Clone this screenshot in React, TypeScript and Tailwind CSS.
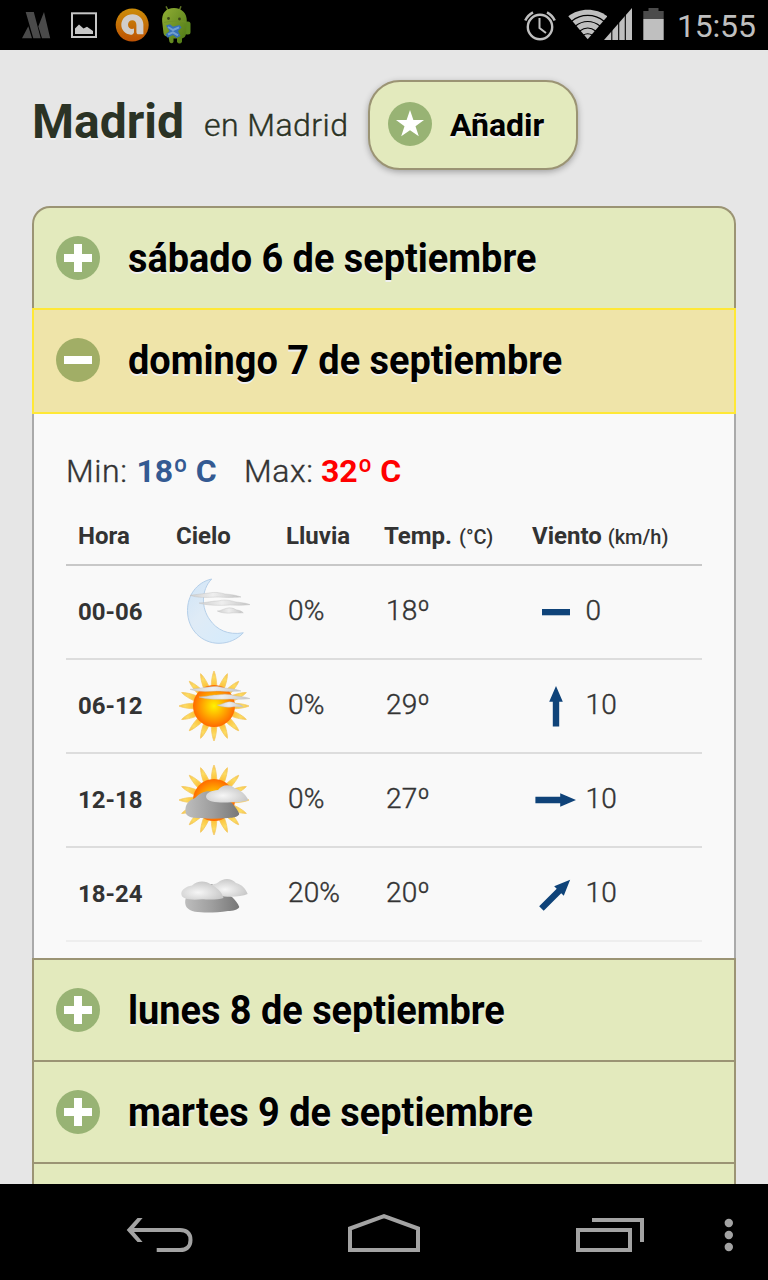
import React from "react";

const shadow = "[text-shadow:0_2px_0_#f0f0f0]";

function StatusBar() {
  return (
    <header className="flex h-[50px] shrink-0 items-center bg-black pl-[20px] text-[#bfbfbf]">
      <svg width="32" height="50" viewBox="20 0 32 50" fill="#4a4a4a">
        <path d="M22 38.3 28.3 26.3 32 38.3ZM25.7 12H33.8L40.7 38.3H33.3ZM38.3 26.5 44 12 50.2 38.3H42Z" />
      </svg>
      <svg className="ml-[17px]" width="30" height="50" viewBox="69 0 30 50">
        <rect x="72" y="13.3" width="24" height="23.7" fill="none" stroke="#c6c6c6" strokeWidth="2" />
        <path d="M75 34V28.5L79 24.5 83.5 28.5 87 26.8 93 31V34Z" fill="#c6c6c6" />
      </svg>
      <svg className="ml-[15px]" width="36" height="50" viewBox="114 0 36 50">
        <defs>
          <linearGradient id="orange" x1="0" y1="0" x2="0" y2="1">
            <stop offset="0" stopColor="#cc8d08" />
            <stop offset="1" stopColor="#bd5204" />
          </linearGradient>
        </defs>
        <circle cx="132.2" cy="25" r="16.5" fill="url(#orange)" />
        <path d="M132.5 14.2C138.7 14.2 143.4 18.6 143.4 24.5V34.3H138.6C137.2 34.3 136.4 33.4 136.4 32V25C136.4 22.3 134.8 20.3 132.3 20.3C129.8 20.3 128 22.2 128 24.7C128 27.2 129.8 29 132 29C132.8 29 133.5 28.8 134 28.5V32.4C133.4 34 132.3 34.7 130.7 34.7C125.3 34.2 121.3 30 121.3 24.8C121.3 18.8 126.2 14.2 132.5 14.2Z" fill="#d0cdca" />
      </svg>
      <svg className="ml-[11px]" width="32" height="50" viewBox="161 0 32 50">
        <defs>
          <linearGradient id="droid" x1="0" y1="0" x2="1" y2="1">
            <stop offset="0" stopColor="#91ae35" />
            <stop offset="1" stopColor="#4d7815" />
          </linearGradient>
        </defs>
        <path d="M166 6.3 168.5 11M181 6.3 179 11" stroke="#5f7425" strokeWidth="1.5" />
        <rect x="184.5" y="21.5" width="6" height="13" rx="2.5" fill="#5f8a20" />
        <path d="M162.2 22C161.5 13 166 8 174 8C182 8 187 13.5 186.8 21L186 34Q185.5 37.5 182 38.5V42Q179.5 45 177 42V38.5H173.5V42Q171.5 44.5 169.5 42L168.5 37Q163.8 36.5 163.5 33Z" fill="url(#droid)" />
        <path d="M164 22.5C171 20.5 179 21 186 22" fill="none" stroke="#6f8f28" strokeWidth="0.8" />
        <circle cx="168.5" cy="18.5" r="1.4" fill="#3a4618" />
        <circle cx="179.5" cy="19" r="1.4" fill="#3a4618" />
        <path d="M166 25.5 170 24.3 173 26.8 179.5 25 181.5 27.5 178 31 180.5 36 176.5 38 173 35 167.5 37.8 165.5 34.5 169.5 31Z" fill="#3770b8" />
        <path d="M168 27 173 30 179 27.3M168 34.5 173 32.3 178 35.3" fill="none" stroke="#719fd0" strokeWidth="2" />
      </svg>
      <div className="ml-auto flex items-center">
        <svg width="34" height="50" viewBox="523 0 34 50" fill="none" stroke="#bfbfbf">
          <circle cx="540" cy="27" r="12.2" strokeWidth="2.4" />
          <path d="M539.5 18V28L546 33" strokeWidth="2" />
          <path d="M525.3 20.5A17 17 0 0 1 533 12.3M547 12.3A17 17 0 0 1 554.7 20.5" strokeWidth="2.6" />
        </svg>
        <svg className="ml-[10px]" width="40" height="50" viewBox="567 0 40 50">
          <path d="M568.3 16.3C579 7.4 596.5 7.4 607.3 16.3L587.7 39.3Z" fill="#bfbfbf" />
          <path d="M571.5 21.2C581 13.4 594.5 13.4 604 21.2M575.5 26C583 20 592.5 20 600 26M579.7 31C585 27 590.5 27 595.7 31M583 35.3C586 33.3 589.5 33.3 592.5 35.3" fill="none" stroke="black" strokeWidth="1.1" />
        </svg>
        <svg className="-ml-[3px]" width="30" height="50" viewBox="604 0 30 50">
          <path d="M604 40 632 8V40Z" fill="#bfbfbf" />
          <path d="M611.8 25V41M618.7 15V41M625.3 8V41" stroke="black" strokeWidth="1.1" />
        </svg>
        <svg className="ml-[8px]" width="24" height="50" viewBox="642 0 24 50">
          <path d="M643.3 11H648.5V8H658.5V11H663.7V19H643.3Z" fill="#4b4b4b" />
          <path d="M643.3 19H663.7V40H643.3Z" fill="#bfbfbf" />
        </svg>
        <span className="ml-[11px] w-[91px] whitespace-nowrap pt-[2px] text-[32px] leading-[50px] -tracking-[0.2px]">15:55</span>
      </div>
    </header>
  );
}

function BadgeIcon({ kind }: { kind: "plus" | "minus" | "star" }) {
  return (
    <svg className="shrink-0" width="44" height="44" viewBox="0 0 44 44">
      <circle cx="22" cy="22" r="22" fill={kind === "minus" ? "#a1ae66" : "#98b374"} />
      {kind === "star" ? (
        <path d="M22 8 25.4 18H36L27.5 24.2 30.8 34.3 22 28.2 13.2 34.3 16.5 24.2 8 18H18.6Z" fill="white" />
      ) : (
        <path d={kind === "plus" ? "M8 18H18V8H26V18H36V26H26V36H18V26H8Z" : "M8 18H36V26H8Z"} fill="white" />
      )}
    </svg>
  );
}

function DayHeader({ label, open = false, className = "" }: { label: string; open?: boolean; className?: string }) {
  return (
    <h2
      className={`flex shrink-0 items-center pl-[22px] ${
        open
          ? "h-[106px] border-2 border-[#ffe836] bg-[#efe4a9] pb-[2px]"
          : "h-[102px] border-x-2 border-t-2 border-[#9b9474] bg-[#e3eabd]"
      } ${className}`}
    >
      <BadgeIcon kind={open ? "minus" : "plus"} />
      <span className={`ml-[27.5px] origin-left scale-x-[0.947] whitespace-nowrap pt-[2px] text-[40px] font-bold leading-[52px] text-black ${shadow}`}>{label}</span>
    </h2>
  );
}

function SkyDefs() {
  return (
    <svg width="0" height="0" className="absolute">
      <defs>
        <linearGradient id="moon" x1="0" y1="0" x2="1" y2="1">
          <stop offset="0" stopColor="#cfe4f7" />
          <stop offset="0.4" stopColor="#dfebf6" />
          <stop offset="1" stopColor="#d3ebfd" />
        </linearGradient>
        <radialGradient id="disc">
          <stop offset="0" stopColor="#fff200" />
          <stop offset="0.5" stopColor="#ffae00" />
          <stop offset="1" stopColor="#ff6a00" />
        </radialGradient>
        <radialGradient id="ray" gradientUnits="userSpaceOnUse" cx="36" cy="36" r="36">
          <stop offset="0.55" stopColor="#fdbf35" />
          <stop offset="0.8" stopColor="#fcdc62" />
          <stop offset="1" stopColor="#f5c04c" />
        </radialGradient>
        <linearGradient id="dark" x1="0" y1="0" x2="1" y2="0">
          <stop offset="0" stopColor="#bdbdbd" />
          <stop offset="0.5" stopColor="#9e9e9e" />
          <stop offset="1" stopColor="#777777" />
        </linearGradient>
        <radialGradient id="light" cx="0.4" cy="0.6" r="0.6">
          <stop offset="0" stopColor="#f6f6f6" />
          <stop offset="1" stopColor="#c9c9c9" />
        </radialGradient>
        <linearGradient id="haze" x1="0" y1="0" x2="1" y2="0">
          <stop offset="0" stopColor="#cfcfcf" />
          <stop offset="0.45" stopColor="#eeeeee" />
          <stop offset="1" stopColor="#c4c4c4" />
        </linearGradient>
      </defs>
    </svg>
  );
}

function Sun() {
  return (
    <g>
      {Array.from({ length: 16 }, (_, i) => (
        <path key={i} d="M33.2 17C33.2 11 34.6 3.5 36 1C37.4 3.5 38.8 11 38.8 17Z" fill="url(#ray)" stroke="#f3c65c" strokeWidth="0.7" transform={`rotate(${i * 22.5} 36 36)`} />
      ))}
      <circle cx="36" cy="36" r="21" fill="url(#disc)" />
    </g>
  );
}

function Haze() {
  return (
    <g fill="url(#haze)" stroke="#bdbdbd" strokeWidth="0.4">
      <path d="M12 19.3C18 18.8 25 17.5 31 17C36 15.8 42 16.5 47 18C53 18.5 59 19.3 63 21C54 21.6 48 21.5 39 21C29 21.5 19 22 12 19.3Z" />
      <path d="M21 27C29 26.6 34 25 41 24.8C48 23.2 53 24.8 58 26C63 26.5 69 27.2 72 28.6C66 29.6 60 29.2 52 29C41 29.7 28 29.5 21 27Z" />
      <path d="M39.3 35C43 34.7 45 33.2 48 32.4C52 31.2 56 32.2 58 33.8C61 34.3 64 35.2 65.3 36.8C61 37.2 58 36.6 54 36.9C49 37.5 43 37 39.3 35Z" />
    </g>
  );
}

type SkyKind = "moon" | "haze" | "cloudy" | "overcast";

function Sky({ kind }: { kind: SkyKind }) {
  return (
    <svg className="block" width="72" height="72" viewBox="0 0 72 72" overflow="visible">
      {kind === "moon" && (
        <path d="M33.7 3C18 6.5 9.5 20 9.5 34.5C9.5 54 24 67.3 41 67.3C51 67.3 59.5 63 65.3 56.8C50 59.5 38.5 53.5 32 44C23 32 23 14 33.7 3Z" fill="url(#moon)" stroke="#b5cfe9" strokeWidth="1" />
      )}
      {(kind === "haze" || kind === "cloudy") && <Sun />}
      {(kind === "moon" || kind === "haze") && <Haze />}
      {kind === "cloudy" && (
        <g>
          <path d="M7.5 47C7 40 11 36.5 17 34C23 28 28 26 37 28L54 39C57 43 60 46 61.3 50C60 53 56 53.6 50 54C38 55 24 54.8 16 53.8C10 53 7.7 51 7.5 47Z" fill="url(#dark)" />
          <path d="M28 33C28 28.5 34 26.5 40 26C44 20.5 52 19.5 57 24.5C62 25.5 68 30.5 70.3 36C66 38 59 38.3 53 38.3C44 38.8 29 39 28 33Z" fill="url(#light)" />
        </g>
      )}
      {kind === "overcast" && (
        <g>
          <path d="M7.3 42C9 34 20 28 34 26L54 39C57 42 60 45 61.3 49C60 52 55 52.8 50 53C38 54.8 26 55 17 53.8C9 52 6.5 48 7.3 42Z" fill="url(#dark)" />
          <path d="M32 28C35 26 38 26 40 24.5C45 20 53 19.5 58 25C64 26.5 68 31 69.7 36C64 38.5 56 39 46 38.5C38 37 34 33 32 28Z" fill="url(#light)" />
          <path d="M3.3 35.5C3.5 31.5 8 28.5 14 27.5C19 22.5 28 22.5 33 26.5C38 29 44 33.5 45.5 40C40 42 30 41.5 24 41.3C13 42.3 3 41.5 3.3 35.5Z" fill="url(#light)" />
        </g>
      )}
    </svg>
  );
}

function Wind({ angle }: { angle: number | null }) {
  return (
    <svg className="shrink-0" width="48" height="48" viewBox="0 0 48 48" fill="#0f4379">
      {angle === null ? (
        <path d="M10 21H38V27.3H10Z" />
      ) : (
        <path d="M24 4 30.8 19.8H27.2V44.6H20.8V19.8H17.2Z" transform={`rotate(${angle} 24 24)`} />
      )}
    </svg>
  );
}

const rows: { hour: string; sky: SkyKind; rain: string; temp: string; angle: number | null; wind: string }[] = [
  { hour: "00-06", sky: "moon", rain: "0%", temp: "18º", angle: null, wind: "0" },
  { hour: "06-12", sky: "haze", rain: "0%", temp: "29º", angle: 0, wind: "10" },
  { hour: "12-18", sky: "cloudy", rain: "0%", temp: "27º", angle: 90, wind: "10" },
  { hour: "18-24", sky: "overcast", rain: "20%", temp: "20º", angle: 45, wind: "10" },
];

const grid = "grid grid-cols-[98px_110px_98px_148px_1fr] items-center pl-[12px]";
const book = "font-light [-webkit-text-stroke:0.4px_currentColor]";
const value = `pb-[2px] text-[28px] tracking-[0.1px] ${book}`;

function Forecast() {
  return (
    <section className="h-[544px] shrink-0 border-x-2 border-[#aaaaaa] bg-[#f9f9f9] px-[32px] pt-[34px] text-[#333]">
      <SkyDefs />
      <p className="flex h-[46px] items-center whitespace-nowrap text-[32px]">
        <span className={`w-[70.5px] tracking-[0.6px] ${book}`}>Min:</span>
        <b className="w-[107.5px] font-bold text-[#345a92]">18º C</b>
        <span className={`w-[77px] tracking-[0.6px] ${book}`}>Max:</span>
        <b className="font-bold text-[#ff0000]">32º C</b>
      </p>
      <div className={`${grid} mt-[14px] h-[58px] whitespace-nowrap border-b-2 border-[#c8c8c8] text-[24px] font-bold`}>
        <span>Hora</span>
        <span>Cielo</span>
        <span>Lluvia</span>
        <span>Temp. <small className="ml-px text-[20px] font-medium">(°C)</small></span>
        <span>Viento <small className="text-[20px] font-medium">(km/h)</small></span>
      </div>
      {rows.map((r, i) => (
        <div key={r.hour} className={`${grid} h-[94px] whitespace-nowrap border-b-2 ${i === 3 ? "border-[#eeeeee]" : "border-[#dddddd]"}`}>
          <b className="text-[24px] font-bold">{r.hour}</b>
          <div className="pl-[2px]"><Sky kind={r.sky} /></div>
          <span className={`pl-[2px] ${value}`}>{r.rain}</span>
          <span className={`pl-[2px] ${value}`}>{r.temp}</span>
          <div className="flex items-center">
            <Wind angle={r.angle} />
            <span className={`ml-[5.5px] ${value}`}>{r.wind}</span>
          </div>
        </div>
      ))}
    </section>
  );
}

function NavBar() {
  return (
    <nav className="flex h-[96px] shrink-0 items-center bg-black">
      <svg className="ml-[124px]" width="72" height="96" viewBox="124 1184 72 96" fill="none" stroke="#a3a3a3" strokeWidth="4">
        <path d="M129 1230H180C186 1230 190.5 1233 190.5 1240C190.5 1247 186 1250 180 1250H156.7" />
        <path d="M126.7 1230 137.5 1218H142.6L132.3 1230 142.6 1242H137.5Z" fill="#a3a3a3" stroke="none" />
      </svg>
      <svg className="ml-[148px]" width="80" height="96" viewBox="344 1184 80 96" fill="none" stroke="#a3a3a3" strokeWidth="4">
        <path d="M350 1250V1228.5L384 1216.2 418 1228.5V1250Z" />
      </svg>
      <svg className="ml-[148px]" width="76" height="96" viewBox="572 1184 76 96" fill="none" stroke="#a3a3a3" strokeWidth="4">
        <path d="M578 1230H630V1250H578ZM592 1220H642V1242" />
      </svg>
      <svg className="ml-[71px]" width="20" height="96" viewBox="719 1184 20 96" fill="#a3a3a3">
        <circle cx="728.8" cy="1223" r="4.2" />
        <circle cx="728.8" cy="1235" r="4.2" />
        <circle cx="728.8" cy="1247" r="4.2" />
      </svg>
    </nav>
  );
}

export default function App() {
  return (
    <div className="flex h-[1280px] w-[768px] flex-col overflow-hidden bg-[#e6e6e6] font-[Roboto,sans-serif]">
      <StatusBar />
      <main className="flex min-h-0 flex-1 flex-col overflow-hidden px-[32px]">
        <div className="flex h-[156px] shrink-0 items-start pt-[30px]">
          <h1 className={`w-[172px] whitespace-nowrap text-[48px] font-bold leading-[84px] text-[#2b3325] ${shadow}`}>Madrid</h1>
          <span className={`w-[164px] whitespace-nowrap text-[32px] leading-[90px] tracking-[0.45px] text-[#2b3325] ${book} ${shadow}`}>en Madrid</span>
          <button className="flex h-[90px] w-[210px] items-center rounded-[32px] border-2 border-[#9b9474] bg-[#e3eabd] pb-[2px] pl-[18px] shadow-[0_2px_6px_rgba(0,0,0,0.3)]">
            <BadgeIcon kind="star" />
            <span className={`ml-[18px] whitespace-nowrap pt-[2px] text-[32px] font-bold text-black ${shadow}`}>Añadir</span>
          </button>
        </div>
        <DayHeader label="sábado 6 de septiembre" className="rounded-t-[18px]" />
        <DayHeader label="domingo 7 de septiembre" open />
        <Forecast />
        <DayHeader label="lunes 8 de septiembre" />
        <DayHeader label="martes 9 de septiembre" />
        <div className="flex-1 border-x-2 border-t-2 border-[#9b9474] bg-[#e3eabd]" />
      </main>
      <NavBar />
    </div>
  );
}
